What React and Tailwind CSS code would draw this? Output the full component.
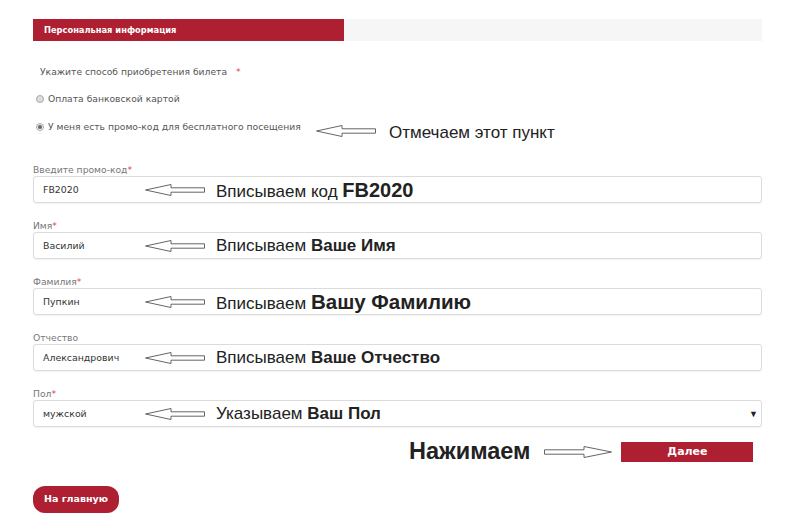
import React from "react";

const ArrowLeft = ({ className = "" }) => (
  <svg width="60" height="14" viewBox="0 0 60 14" className={"shrink-0 " + className}>
    <path d="M0.5 7 L26 1.5 L26 4.8 L59.5 4.8 L59.5 9.2 L26 9.2 L26 12.5 Z" fill="white" stroke="#555" strokeWidth="0.9" />
  </svg>
);

const ArrowRight = () => (
  <svg width="68" height="14" viewBox="0 0 68 14" className="shrink-0">
    <path d="M67.5 7 L40 1.5 L40 4.8 L0.5 4.8 L0.5 9.2 L40 9.2 L40 12.5 Z" fill="white" stroke="#555" strokeWidth="0.9" />
  </svg>
);

const verdana = { fontFamily: '"DejaVu Sans", Verdana, sans-serif' };
const arial = { fontFamily: '"Liberation Sans", Arial, sans-serif' };

const Field = ({ label, req, value, children, select }) => (
  <div className="flex flex-col">
    <div className="h-[12px] text-[9.2px] text-[#777] leading-[12px] whitespace-nowrap" style={verdana}>
      {label}
      {req && <span className="text-[#d9434f]">*</span>}
    </div>
    <div className="h-[27px] w-[729px] border border-[#dcdcdc] rounded-[3px] bg-white shadow-[0_1px_1px_rgba(0,0,0,0.05)] flex items-center pl-[9px] pr-[3px] pt-[1px]">
      <span className="w-[102px] shrink-0 text-[9.4px] text-[#333] whitespace-nowrap" style={verdana}>{value}</span>
      <ArrowLeft />
      <span className="ml-[11px] text-[17px] text-[#222] whitespace-nowrap" style={arial}>{children}</span>
      {select && <span className="ml-auto text-[9px] text-[#222]">▼</span>}
    </div>
  </div>
);

export default function App() {
  return (
    <div className="w-[800px] h-[519px] bg-white pl-[33px] pt-[19px] overflow-hidden">
      <div className="w-[729px] h-[22px] bg-[#f6f6f6] flex">
        <div className="w-[311px] h-full bg-[#ad1f31] flex items-center pl-[11px] text-white text-[8.3px] font-bold whitespace-nowrap" style={verdana}>
          Персональная информация
        </div>
      </div>

      <div className="pl-[7px] mt-[23px] text-[9.2px] text-[#555] h-[16px] flex items-center whitespace-nowrap" style={verdana}>
        Укажите способ приобретения билета
        <span className="ml-[9px] text-[#d9434f]">*</span>
      </div>

      <div className="mt-[12px] h-[14px] flex items-center pl-[3px] text-[9.2px] text-[#555] whitespace-nowrap" style={verdana}>
        <span className="w-[8px] h-[8px] rounded-full border border-[#aaa] bg-[#ddd] mr-[4px]"></span>
        Оплата банковской картой
      </div>

      <div className="mt-[14px] h-[14px] flex items-center pl-[3px] text-[9.2px] text-[#555] whitespace-nowrap" style={verdana}>
        <span className="w-[8px] h-[8px] rounded-full border border-[#aaa] bg-[#eee] mr-[4px] flex items-center justify-center shrink-0">
          <span className="w-[4px] h-[4px] rounded-full bg-[#666]"></span>
        </span>
        <span className="w-[268px] shrink-0">У меня есть промо-код для бесплатного посещения</span>
        <ArrowLeft className="mt-[8px]" />
        <span className="ml-[13px] mt-[12px] text-[17px] text-[#222]" style={arial}>Отмечаем этот пункт</span>
      </div>

      <div className="mt-[30px] flex flex-col gap-[17px]">
        <Field label="Введите промо-код" req value="FB2020">
          Вписываем код <b className="text-[20px]">FB2020</b>
        </Field>
        <Field label="Имя" req value="Василий">
          Вписываем <b>Ваше Имя</b>
        </Field>
        <Field label="Фамилия" req value="Пупкин">
          Вписываем <b className="text-[20.5px]">Вашу Фамилию</b>
        </Field>
        <Field label="Отчество" value="Александрович">
          Вписываем <b>Ваше Отчество</b>
        </Field>
        <Field label="Пол" req value="мужской" select>
          Указываем <b>Ваш Пол</b>
        </Field>
      </div>

      <div className="flex items-center mt-[12px] h-[26px]">
        <span className="ml-[376px] text-[23.5px] font-bold text-[#222] whitespace-nowrap" style={arial}>Нажимаем</span>
        <span className="ml-[14px]"><ArrowRight /></span>
        <button className="ml-[9px] w-[132px] h-[20px] bg-[#ad1f31] text-white text-[11px] font-bold" style={verdana}>Далее</button>
      </div>

      <div className="mt-[19px]">
        <button className="w-[86px] h-[27px] rounded-[12px] bg-[#ad1f31] text-white text-[9.5px] font-bold whitespace-nowrap" style={verdana}>На главную</button>
      </div>
    </div>
  );
}
